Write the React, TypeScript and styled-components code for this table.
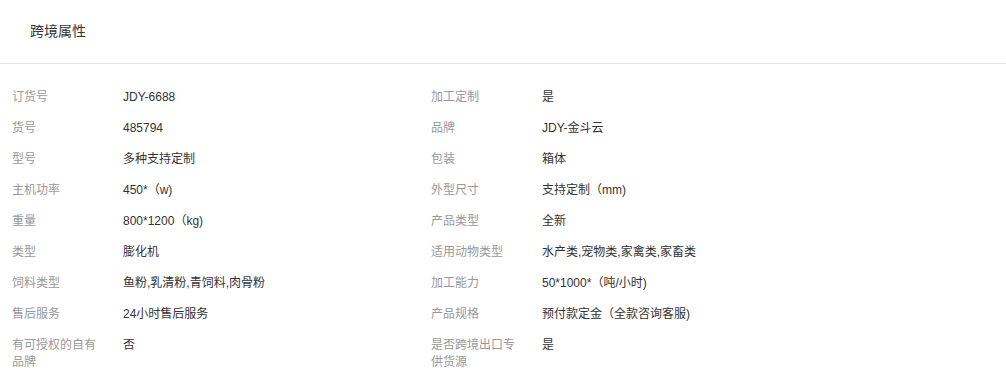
import React from "react";
import styled, { createGlobalStyle } from "styled-components";

const GlobalStyle = createGlobalStyle`
    body {
        margin: 0;
        background: #fff;
        font-family: "Liberation Sans", Arial, "Noto Sans CJK SC", sans-serif;
    }
`

const Panel = styled.section`
    width: 1006px;
    background: #fff;
`

const Header = styled.div`
    display: flex;
    align-items: center;
    height: 64px;
    box-sizing: border-box;
    padding: 0 30px 3px;
    border-bottom: 1px solid #e6e6e6;
`

const Title = styled.h3`
    margin: 0;
    font-size: 14px;
    font-weight: normal;
    color: #333;
`

const Attrs = styled.div`
    display: grid;
    grid-template-columns: 419px 419px;
    padding: 18px 0 0 12px;
`

const Attr = styled.div`
    display: flex;
    align-items: flex-start;
    padding: 7px 0;
    font-size: 12px;
    line-height: 17px;
`

const Label = styled.div`
    flex: 0 0 111px;
    box-sizing: border-box;
    padding-right: 20px;
    color: #999;
`

const Value = styled.div`
    flex: 1;
    color: #333;
`

const attrs: [string, string][] = [
    ["订货号", "JDY-6688"],
    ["加工定制", "是"],
    ["货号", "485794"],
    ["品牌", "JDY-金斗云"],
    ["型号", "多种支持定制"],
    ["包装", "箱体"],
    ["主机功率", "450*（w)"],
    ["外型尺寸", "支持定制（mm)"],
    ["重量", "800*1200（kg)"],
    ["产品类型", "全新"],
    ["类型", "膨化机"],
    ["适用动物类型", "水产类,宠物类,家禽类,家畜类"],
    ["饲料类型", "鱼粉,乳清粉,青饲料,肉骨粉"],
    ["加工能力", "50*1000*（吨/小时)"],
    ["售后服务", "24小时售后服务"],
    ["产品规格", "预付款定金（全款咨询客服)"],
    ["有可授权的自有品牌", "否"],
    ["是否跨境出口专供货源", "是"],
];

export default function App() {
    return (
        <Panel>
            <GlobalStyle />
            <Header>
                <Title>跨境属性</Title>
            </Header>
            <Attrs>
                {attrs.map(([label, value]) => (
                    <Attr key={label}>
                        <Label>{label}</Label>
                        <Value>{value}</Value>
                    </Attr>
                ))}
            </Attrs>
        </Panel>
    );
}
